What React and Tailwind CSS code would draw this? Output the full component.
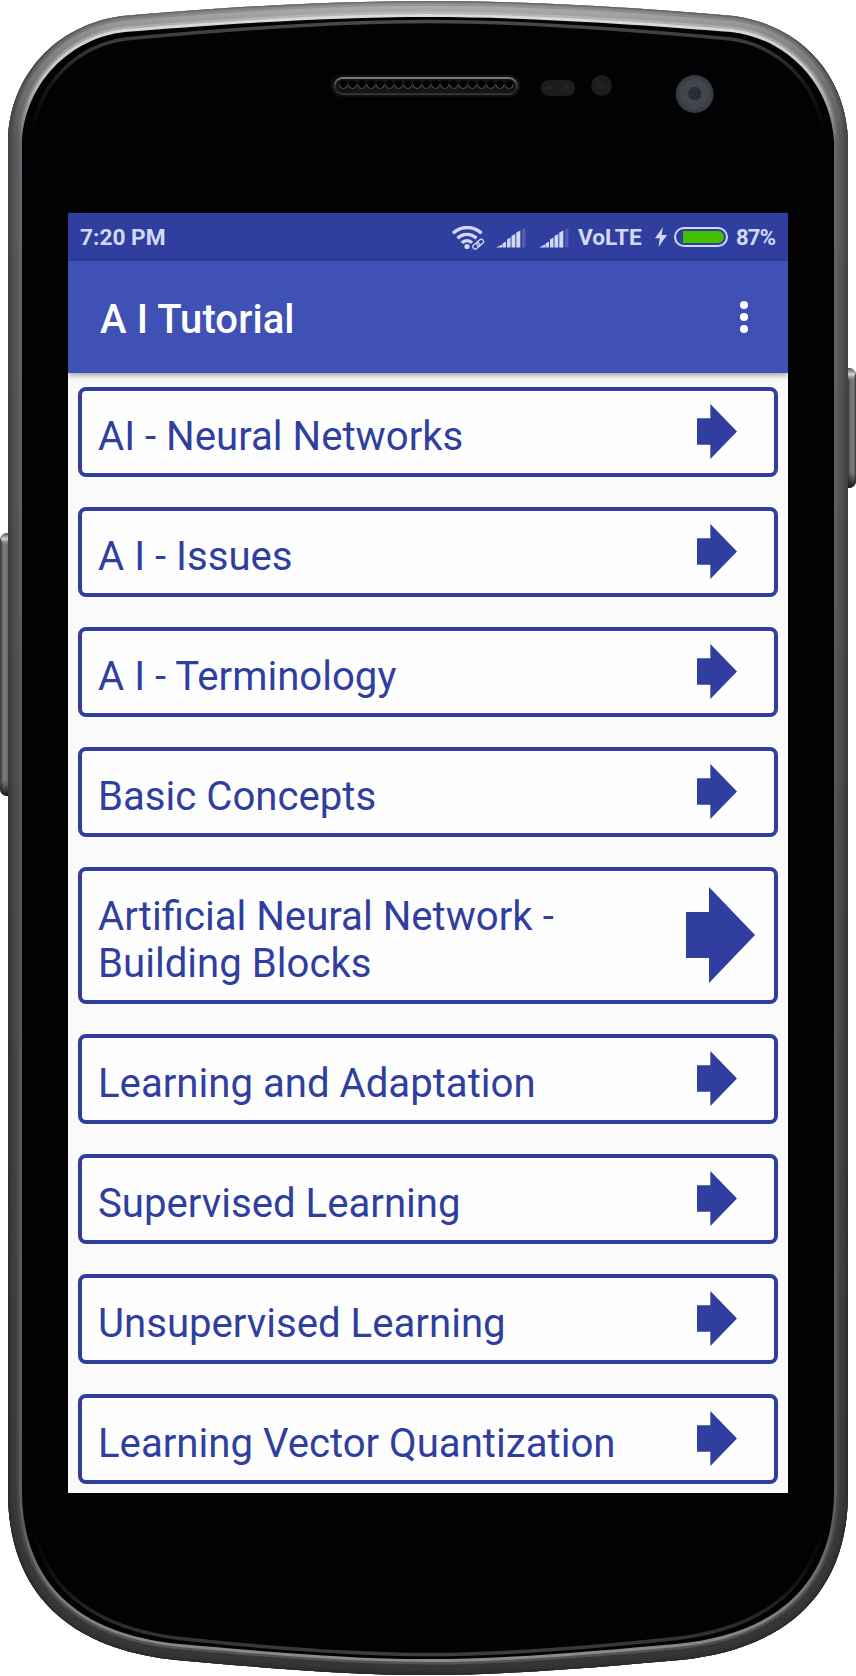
import React from "react";

const topics = [
  { title: ["AI - Neural Networks"] },
  { title: ["A I - Issues"] },
  { title: ["A I - Terminology"] },
  { title: ["Basic Concepts"] },
  { title: ["Artificial Neural Network -", "Building Blocks"], large: true },
  { title: ["Learning and Adaptation"] },
  { title: ["Supervised Learning"] },
  { title: ["Unsupervised Learning"] },
  { title: ["Learning Vector Quantization"] },
];

const OUTER =
  "M8 140C10 76 55 25 122 16C200 9 320 1 428 1S656 9 734 16C801 25 846 76 848 140V1496C846 1601 778 1650 680 1660C600 1667 510 1675 428 1675S256 1667 176 1660C78 1650 10 1601 8 1496Z";
const INNER =
  "M22 142C25 83 70 38 125 32C200 26 320 17 428 17S656 26 731 32C786 38 831 83 834 142V1494C832 1590 770 1635 676 1644C596 1651 510 1659 428 1659S260 1651 180 1644C86 1635 24 1590 22 1494Z";
const GLASS_TOP =
  "M32 136C38 83 77 46 125 39C200 32 320 21.500 428 21.500S656 32 731 39C779 46 818 83 824 136";
const GLASS_BOTTOM =
  "M34 1530C48 1594 100 1629 180 1638.500C260 1647 346 1654.500 428 1654.500S596 1647 676 1638.500C756 1629 808 1594 822 1530";

function PhoneBody() {
  return (
    <svg className="absolute inset-0 h-[1676px] w-[856px]" viewBox="0 0 856 1676" fill="none" aria-hidden="true">
      <defs>
        <linearGradient id="edge" x1="0" y1="0" x2="0" y2="1676" gradientUnits="userSpaceOnUse">
          <stop offset="0" stopColor="#8c8a8d" />
          <stop offset="0.02" stopColor="#69676a" />
          <stop offset="0.08" stopColor="#4a484b" />
          <stop offset="0.5" stopColor="#3d3b3e" />
          <stop offset="1" stopColor="#302f31" />
        </linearGradient>
        <linearGradient id="outline" x1="0" y1="0" x2="0" y2="1676" gradientUnits="userSpaceOnUse">
          <stop offset="0" stopColor="#6b696c" />
          <stop offset="0.04" stopColor="#454346" />
          <stop offset="1" stopColor="#282729" />
        </linearGradient>
        <linearGradient id="rim" x1="0" y1="0" x2="0" y2="1676" gradientUnits="userSpaceOnUse">
          <stop offset="0" stopColor="#b3b1b4" />
          <stop offset="0.02" stopColor="#8d8b8e" />
          <stop offset="0.08" stopColor="#59575a" />
          <stop offset="0.5" stopColor="#4b494c" />
          <stop offset="1" stopColor="#363437" />
        </linearGradient>
        <linearGradient id="shine" x1="0" y1="0" x2="0" y2="1676" gradientUnits="userSpaceOnUse">
          <stop offset="0" stopColor="#e0dee1" />
          <stop offset="0.045" stopColor="#c9c7ca" />
          <stop offset="0.085" stopColor="#68666a" />
          <stop offset="0.5" stopColor="#555356" />
          <stop offset="0.91" stopColor="#5d5b5e" />
          <stop offset="0.96" stopColor="#7f7d80" />
          <stop offset="1" stopColor="#918f92" />
        </linearGradient>
        <linearGradient id="glassTop" x1="0" y1="20" x2="0" y2="136" gradientUnits="userSpaceOnUse">
          <stop offset="0" stopColor="#4b494c" />
          <stop offset="0.25" stopColor="#363437" />
          <stop offset="0.6" stopColor="#151416" />
          <stop offset="1" stopColor="#020103" />
        </linearGradient>
        <linearGradient id="glassBottom" x1="0" y1="1530" x2="0" y2="1656" gradientUnits="userSpaceOnUse">
          <stop offset="0" stopColor="#020103" />
          <stop offset="0.5" stopColor="#19181a" />
          <stop offset="1" stopColor="#3f3d40" />
        </linearGradient>
        <linearGradient id="leftKey" x1="0" y1="0" x2="10" y2="0" gradientUnits="userSpaceOnUse">
          <stop offset="0" stopColor="#39373a" />
          <stop offset="0.4" stopColor="#7f7d80" />
          <stop offset="0.8" stopColor="#6c6a6d" />
          <stop offset="1" stopColor="#39373a" />
        </linearGradient>
        <linearGradient id="rightKey" x1="846" y1="0" x2="856" y2="0" gradientUnits="userSpaceOnUse">
          <stop offset="0.2" stopColor="#39373a" />
          <stop offset="0.4" stopColor="#6c6a6d" />
          <stop offset="0.75" stopColor="#7f7d80" />
          <stop offset="1" stopColor="#39373a" />
        </linearGradient>
        <linearGradient id="keyCap" x1="0" y1="0" x2="0" y2="1">
          <stop offset="0" stopColor="#555" />
          <stop offset="0.5" stopColor="#d2d0d3" />
          <stop offset="1" stopColor="#858386" stopOpacity="0" />
        </linearGradient>
        <linearGradient id="keyFoot" x1="0" y1="0" x2="0" y2="1">
          <stop offset="0" stopColor="#222" stopOpacity="0" />
          <stop offset="1" stopColor="#171717" />
        </linearGradient>
        <linearGradient id="speakerEdge" x1="0" y1="77" x2="0" y2="96" gradientUnits="userSpaceOnUse">
          <stop offset="0" stopColor="#858386" />
          <stop offset="0.3" stopColor="#4b494c" />
          <stop offset="0.7" stopColor="#2b292c" />
          <stop offset="1" stopColor="#39373a" />
        </linearGradient>
        <radialGradient id="lens">
          <stop offset="0" stopColor="#42474f" />
          <stop offset="0.7" stopColor="#41464d" />
          <stop offset="1" stopColor="#33373d" />
        </radialGradient>
        <clipPath id="bodyClip">
          <path d={OUTER} />
        </clipPath>
      </defs>

      <rect x="0" y="533" width="16" height="263" rx="7" fill="url(#leftKey)" />
      <rect x="1" y="533" width="12" height="12" rx="6" fill="url(#keyCap)" />
      <rect x="0" y="780" width="16" height="16" rx="7" fill="url(#keyFoot)" />
      <rect x="840" y="368" width="16" height="120" rx="7" fill="url(#rightKey)" />
      <rect x="843" y="368" width="12" height="13" rx="6" fill="url(#keyCap)" />
      <rect x="840" y="472" width="16" height="16" rx="7" fill="url(#keyFoot)" />

      <path d={OUTER} fill="url(#rim)" />
      <g clipPath="url(#bodyClip)">
        <path d={OUTER} stroke="url(#edge)" strokeWidth="10" opacity="0.6" />
        <path d={OUTER} stroke="url(#edge)" strokeWidth="6" />
        <path d={OUTER} stroke="url(#outline)" strokeWidth="2.400" />
      </g>
      <path d={INNER} stroke="url(#shine)" strokeWidth="11" opacity="0.35" />
      <path d={INNER} stroke="url(#shine)" strokeWidth="6" />
      <path d={INNER} fill="#020103" />
      <path d={GLASS_TOP} stroke="url(#glassTop)" strokeWidth="3.500" />
      <path d={GLASS_BOTTOM} stroke="url(#glassBottom)" strokeWidth="3.500" />

      <rect x="331.500" y="75.500" width="188" height="20.500" rx="9" fill="#0b0a0c" stroke="#19181a" />
      <rect x="334.500" y="78" width="182.500" height="16" rx="8" fill="#141315" stroke="url(#speakerEdge)" strokeWidth="2" />
      {Array.from({ length: 19 }, (_, i) => (
        <g key={i}>
          <circle cx={343.5 + i * 9.2} cy="84.500" r="4" fill="#020103" />
          <path d={`M${339.5 + i * 9.2} 84.500a4 4 0 0 0 8 0`} stroke="#555356" />
        </g>
      ))}
      <rect x="541" y="80" width="34" height="16" rx="8" fill="#1d1c1e" />
      <circle cx="550" cy="87.500" r="3" fill="#232224" />
      <circle cx="566" cy="87.500" r="3" fill="#232224" />
      <circle cx="601.500" cy="85.500" r="10.500" fill="#1d1c1e" />
      <circle cx="601.500" cy="85.500" r="4" fill="#232224" />
      <circle cx="694.700" cy="94" r="19" fill="url(#lens)" />
      <circle cx="694.700" cy="93.500" r="6.700" fill="#292d36" />
    </svg>
  );
}

function WifiIcon() {
  return (
    <svg className="h-6 w-[34px]" viewBox="0 0 34 24" fill="none" stroke="#d3d9f5" aria-hidden="true">
      <path d="M2 7.300C10 -0.400 22.500 -0.400 30.500 7.300" strokeWidth="3.400" />
      <path d="M6.500 12.300C12 7 20 7 25.500 12.300" strokeWidth="3.400" />
      <path d="M10.800 16.900C13.800 13.900 18.200 13.900 21 16.900" strokeWidth="3.400" />
      <circle cx="16" cy="20.500" r="2.600" fill="#d3d9f5" stroke="none" />
      <g strokeWidth="1.300" transform="rotate(-40 27 18)">
        <rect x="20.800" y="16" width="7.500" height="4.500" rx="2.250" />
        <rect x="25.800" y="16" width="7.500" height="4.500" rx="2.250" />
      </g>
    </svg>
  );
}

function SignalIcon() {
  return (
    <svg className="h-5 w-[30px]" viewBox="0 0 30 20" fill="#d3d9f5" aria-hidden="true">
      <path d="M0 19.500L6 16.500V19.500ZM6.500 15.500L10 13.500V19.500H6.500ZM11 11.500L14.500 9.500V19.500H11ZM15.500 8L19.300 6V19.500H15.500ZM20.300 4.500L24.300 2.500V19.500H20.300Z" />
      <path d="M26 1.500L29.500 0V19.500H26Z" opacity="0.2" />
    </svg>
  );
}

function StatusBar() {
  return (
    <div className="flex h-12 items-center bg-[#303f9f] pt-0.5 pr-[13px] pl-3 text-[22.7px] leading-none font-bold text-[#d3d9f5]">
      <span className="w-[100px] whitespace-nowrap">7:20 PM</span>
      <div className="ml-auto flex items-center">
        <WifiIcon />
        <div className="ml-[11px]"><SignalIcon /></div>
        <div className="ml-[13px]"><SignalIcon /></div>
        <span className="ml-[9px] w-[64px] whitespace-nowrap">VoLTE</span>
        <svg className="mb-0.5 ml-[13px] h-5 w-3" viewBox="0 0 12 20" fill="#d3d9f5" aria-hidden="true">
          <path d="M8 0L0 11.300H4.800L3.500 20L12 8H6.500Z" />
        </svg>
        <div className="mb-0.5 ml-[7px] flex h-5 w-[54px] rounded-full border-2 border-[#d3d9f5] py-0.5 pr-0.5 pl-[7px]">
          <div className="w-full rounded-r-full bg-[#43c000]" />
        </div>
        <span className="ml-2 w-[39px] text-[22px] tracking-[-0.8px] whitespace-nowrap">87%</span>
      </div>
    </div>
  );
}

function Arrow({ large }) {
  return (
    <svg
      className={large ? "mr-[19px] mb-0.5 h-24 w-[69px] shrink-0" : "mr-[37px] mb-0.5 h-[55px] w-10 shrink-0"}
      viewBox="0 0 69 96"
      preserveAspectRatio="none"
      fill="#303f9f"
      aria-hidden="true"
    >
      <path d="M0 25H23V0L69 48L23 96V71H0Z" />
    </svg>
  );
}

function TopicCard({ topic }) {
  return (
    <button
      type="button"
      className="flex w-full items-center justify-between rounded-lg border-4 border-[#303f9f] bg-[#fefefe] text-left"
    >
      <span className="pt-[22px] pb-[13px] pl-4 text-[40.15px] leading-[47px] whitespace-nowrap text-[#303f9f]">
        {topic.title.map((line) => (
          <span key={line} className="block">{line}</span>
        ))}
      </span>
      <Arrow large={topic.large} />
    </button>
  );
}

export default function App() {
  return (
    <div className="relative h-[1676px] w-[856px] overflow-hidden bg-white font-['Roboto',sans-serif]">
      <PhoneBody />
      <div className="relative pt-[213px] pl-[68px]">
        <main className="flex h-[1280px] w-[720px] flex-col overflow-hidden bg-[#fafafa]">
          <StatusBar />
          <header className="z-10 flex h-28 shrink-0 items-center justify-between bg-[#3f51b5] pr-10 pl-8 text-white shadow-[0_2px_6px_rgba(0,0,0,0.4)]">
            <h1 className="pt-1 text-[40px] leading-[47px] font-medium tracking-[0.1px] whitespace-nowrap">A I Tutorial</h1>
            <div className="flex flex-col gap-1">
              <span className="size-2 rounded-full bg-white" />
              <span className="size-2 rounded-full bg-white" />
              <span className="size-2 rounded-full bg-white" />
            </div>
          </header>
          <div className="flex flex-col gap-[30px] px-2.5 pt-3.5">
            {topics.map((topic) => (
              <TopicCard key={topic.title[0]} topic={topic} />
            ))}
          </div>
        </main>
      </div>
    </div>
  );
}
